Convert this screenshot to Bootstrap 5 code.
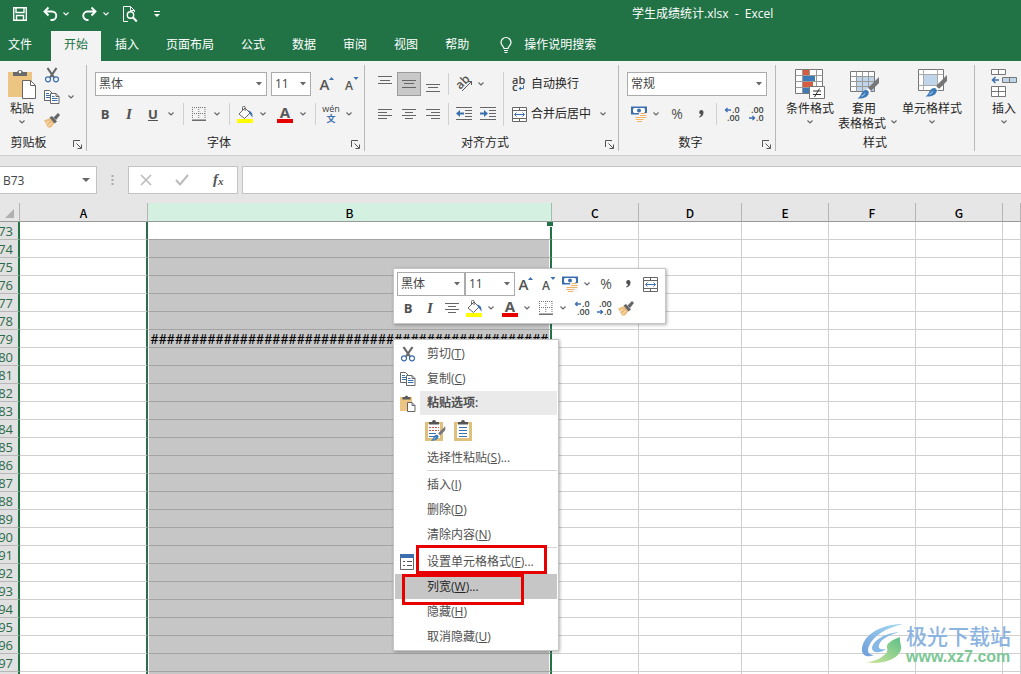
<!DOCTYPE html>
<html lang="zh-CN">
<head>
<meta charset="utf-8">
<meta name="viewport" content="width=device-width, initial-scale=1">
<title>学生成绩统计.xlsx - Excel</title>
<link href="https://cdn.jsdelivr.net/npm/bootstrap@5.3.0/dist/css/bootstrap.min.css" rel="stylesheet">
<style>
  body { font: 12px/16px "Open Sans", "Noto Sans CJK SC", sans-serif; color: #262626; background: #e6e6e6; }
  button, select, input { font: inherit; color: inherit; }
  button { background: none; border: 0; padding: 0; white-space: nowrap; }
  svg { display: block; flex: none; overflow: visible; }
  .app-head { background: #217346; color: #fff; }
  .title-row { height: 31px; padding-bottom: 3px; }
  .quick { width: 40%; padding-left: 13px; }
  .quick button { height: 28px; color: #fff; }
  .tab-row { height: 30px; gap: 1px; }
  .tab-row a { color: #fff; text-decoration: none; padding: 6px 13px 8px; height: 30px; }
  .tab-row a.file-tab { padding-left: 8px; margin-right: 5px; }
  .tab-row a.current { background: #f3f3f3; color: #217346; }
  .ribbon { background: #f3f3f3; border-bottom: 1px solid #cfcfcf; height: 95px; }
  .group { border-right: 1px solid #b9b9b9; margin: 4px 0; height: 86px; display: flex; flex-direction: column; flex: none; }
  .group-body { height: 71px; padding-top: 7px; }
  .group-foot { height: 16px; display: flex; }
  .group-foot span { flex: 1; text-align: center; }
  .group-foot button { margin: 4px 4px 0 0; height: 10px; }
  .tool-row { display: flex; align-items: center; height: 24px; }
  .tool-rows { display: grid; gap: 6px; align-content: start; }
  .ib { width: 24px; height: 24px; display: inline-flex; align-items: center; justify-content: center; color: #505050; flex: none; }
  .ib.tight { width: 20px; }
  .ib.on { background: #c8c8c8; box-shadow: inset 0 0 0 1px #9c9c9c; }
  .drop { width: 16px; height: 24px; display: inline-flex; align-items: center; justify-content: center; color: #666; flex: none; }
  .drop.slim { width: 10px; }
  .vline { width: 1px; height: 22px; background: #d0d0d0; margin: 0 5px 0 4px; flex: none; }
  .vline.near { margin: 0 3px; }
  .vline.tall { height: 54px; }
  .pick { appearance: none; border: 1px solid #ababab; border-radius: 0; height: 24px; padding: 0 3px; color: #444;
    background: #fff url("data:image/svg+xml,%3Csvg xmlns='http://www.w3.org/2000/svg' width='6' height='4'%3E%3Cpath d='M0 0h6L3 3.500z' fill='%23666'/%3E%3C/svg%3E") no-repeat right 4px center; flex: none; }
  .glyph { font-size: 13px; font-weight: 700; }
  .glyph.slant { font-family: "Liberation Serif", serif; font-style: italic; font-size: 15px; }
  .glyph.pct { font-size: 14px; font-weight: 400; }
  .big { display: flex; flex-direction: column; align-items: center; flex: none; line-height: 15px; }
  .big .pic { height: 32px; }
  .big .drop { height: 12px; }
  .clip-col { margin-left: 6px; }
  .styles-body { padding-left: 10px; }
  .formula { height: 47px; padding-top: 10px; }
  .formula .cellbox { border: 1px solid #c3c3c3; background: #fff; height: 28px; border-radius: 0; }
  .name-box { width: 98px; margin-left: -1px; padding-left: 3px; border: 1px solid #c3c3c3; color: #444;
    background: #fff url("data:image/svg+xml,%3Csvg xmlns='http://www.w3.org/2000/svg' width='8' height='4'%3E%3Cpath d='M0 0h8L4 4z' fill='%23666'/%3E%3C/svg%3E") no-repeat right 6px center; height: 28px; }
  .fx-set { width: 110px; }
  .sheet { overflow: hidden; min-height: 0; flex: 1 1 0; }
  .cells { table-layout: fixed; width: 100%; border-collapse: separate; border-spacing: 0; background: #fff; }
  .cells td, .cells th { padding: 0; height: 18px; line-height: 17px; border: 0 solid #d0d0d0; border-width: 0 1px 1px 0; font-weight: 400; }
  .cells thead th { background: #e6e6e6; height: 19px; line-height: 18px; padding-top: 2px; border-color: #999; border-right-color: #b4b4b4; color: #000; text-align: center; font-family: "Noto Sans CJK SC", sans-serif; font-size: 12px; line-height: 16px; font-weight: 500; }
  .cells thead th.chosen { background: #d3f0e0; border-right-color: #9dbfae; }
  .cells tbody th { background: #e1e1e1; color: #2c6b4a; border-right: 2px solid #217346; border-bottom-color: #b8b8b8; font-size: 13px; }
  .cells tbody th span { display: flex; justify-content: flex-end; height: 17px; padding: 1px 5px 0 0; }
  .cells td.before { border-right: 2px solid #2f6b4d; }
  .cells td.chosen { border-left: 1px solid #fff; border-right: 2px solid #217346; background: #c6c6c6; border-bottom-color: #a3a3a3; box-shadow: inset -1px 0 #fff; text-align: center; white-space: nowrap; color: #000; font-family: Lato, sans-serif; font-size: 14px; }
  .cells tbody tr:first-child td.chosen { background: #fff; position: relative; }
  .handle { position: absolute; right: -3px; top: 0; width: 6px; height: 5px; background: #217346; border-bottom: 1px solid #fff; }
  .popup { position: absolute; background: #fff; border: 1px solid #c6c6c6; box-shadow: 1px 1px 3px rgba(0,0,0,.3); }
  .mini { left: 393px; top: 65px; width: 273px; padding: 3px; }
  .mini .ib { width: 22px; }
  .mini .drop { width: 12px; margin-right: 2px; }
  .ctx { left: 393px; top: 136px; width: 166px; padding: 1px; color: #505050; }
  .ctx .item { display: flex; align-items: center; height: 25px; width: 100%; padding-top: 1px; text-align: left; }
  .ctx .slot { width: 32px; padding-left: 5px; }
  .ctx .head { height: 24px; padding-top: 0; font-weight: 600; }
  .ctx .head > span:last-child { background: #eaeaea; flex: 1; height: 24px; line-height: 24px; margin-left: -7px; padding-left: 7px; }
  .ctx .pastes { height: 30px; padding-left: 29px; }
  .ctx .hot { background: #c6c6c6; color: #262626; }
  .ctx hr { margin: 0 0 1px 32px; border-top: 1px solid #d5d5d5; opacity: 1; }
  .ring { position: absolute; border: 3px solid #e60000; pointer-events: none; }
  .ring.one { left: 22px; top: 205px; width: 131px; height: 29px; }
  .ring.two { left: 8px; top: 234px; width: 122px; height: 31px; }
  .brand { position: absolute; right: 10px; bottom: 8px; display: flex; gap: 2px; }
  .brand b { display: block; font-size: 21px; line-height: 24px; color: #8cb4e0; font-weight: 500; }
  .brand i { display: block; font: 700 16px/18px "Liberation Sans", sans-serif; color: #7cc795; }
</style>
</head>
<body class="vh-100 d-flex flex-column overflow-hidden">

<svg class="d-none" aria-hidden="true">
  <symbol id="chev" viewBox="0 0 6 4"><path d="M.5.5 3 3 5.500.5" fill="none" stroke="currentColor" stroke-width="1.100"/></symbol>
  <symbol id="launch" viewBox="0 0 9 9"><path d="M.5 7V.5H7M3.500 3.500 8 8M8.500 4.500v4h-4" fill="none" stroke="#555"/></symbol>
  <symbol id="cut" viewBox="0 0 16 16"><path d="M3.500 1 10 10.500M12.500 1 6 10.500" stroke="#666" stroke-width="2.200" fill="none"/><circle cx="4" cy="12.300" r="2.500" fill="none" stroke="#3b6fae" stroke-width="1.200"/><circle cx="12" cy="12.300" r="2.500" fill="none" stroke="#3b6fae" stroke-width="1.200"/></symbol>
  <symbol id="copy" viewBox="0 0 16 16"><path d="M.5 1.500h5l2.500 2.500v7.500H.5z" fill="#fff" stroke="#666"/><path d="M2 4.500h3M2 6.500h4M2 8.500h4" stroke="#3b6fae"/><path d="M6.500 4.500h5.500l3 3v7H6.500z" fill="#fff" stroke="#666"/><path d="M12 4.500v3h3" fill="none" stroke="#666"/><path d="M8 7.500h2.500M8 9.500h5.500M8 11.500h5.500" stroke="#3b6fae"/></symbol>
  <symbol id="brush" viewBox="0 0 16 16"><path d="M0 8.500 6 6l4.500 5L7 15.500H4z" fill="#edbd7c"/><path d="M2 11.500 5 9M4.500 14l3-3" stroke="#fff" stroke-width=".7"/><path d="M5.500 5.500 8 4l5 5.500-2.500 2z" fill="#666"/><path d="m9.500 5.500 4.500-4.500 2 2-4 5z" fill="#666"/></symbol>
  <symbol id="paste" viewBox="0 0 28 30"><path d="M0 3h24v25H0z" fill="#edc583"/><path d="M5 7V3h4a3.200 3.200 0 0 1 6 0h4v4z" fill="#6a6a6a"/><circle cx="12" cy="3" r="1.200" fill="#fff"/><path d="M14.500 11.500h8l5 5v13h-13z" fill="#fff" stroke="#666"/><path d="M22.500 11.500v5h5" fill="none" stroke="#666"/></symbol>
  <symbol id="paste-small" viewBox="0 0 16 17"><path d="M0 2h12v14H0z" fill="#edc583"/><path d="M2.500 4.500V2H5a1.500 1.500 0 0 1 3 0h2.500v2.500z" fill="#5a5a5a"/><path d="M7.500 7.500h4.500l3 3v6H7.500z" fill="#fff" stroke="#666"/><path d="M12 7.500v3h3" fill="none" stroke="#666"/></symbol>
  <symbol id="edges" viewBox="0 0 14 14"><path d="M.5 0v12M13 0v12M6.750 0v12M0 .5h14M0 6.500h14" stroke="#777" stroke-dasharray="1 1"/><path d="M0 13.200h14" stroke="#555" stroke-width="1.300"/></symbol>
  <symbol id="fill" viewBox="0 0 16 17"><path d="m2 8 6-6 5 5-5.500 5.500z" fill="#fff" stroke="#666"/><path d="M5.500 5V1.500a1.300 1.300 0 0 1 2.600 0V5" fill="none" stroke="#666"/><path d="M11 4.500c3 .5 5 2.500 4.500 7-1-1.500-2-2.500-3-4z" fill="#3b6fae"/><path d="M0 13h16v4H0z" fill="#ffff00"/></symbol>
  <symbol id="ink" viewBox="0 0 16 17"><text x="8" y="12" text-anchor="middle" font-family="Open Sans" font-weight="700" font-size="15" fill="#595959">A</text><path d="M0 13h16v4H0z" fill="#e60000"/></symbol>
  <symbol id="grow" viewBox="0 0 16 16"><text x="5.500" y="14" text-anchor="middle" font-family="Open Sans" font-weight="600" font-size="15" fill="#555">A</text><path d="M10 4h5L12.500 1z" fill="#3b6fae"/></symbol>
  <symbol id="shrink" viewBox="0 0 16 16"><text x="6" y="14" text-anchor="middle" font-family="Open Sans" font-weight="600" font-size="12" fill="#555">A</text><path d="M10.500 1h5L13 4z" fill="#3b6fae"/></symbol>
  <symbol id="a-top" viewBox="0 0 14 16"><path d="M0 .5h14M2 4.500h10M0 7.500h14" stroke="#666"/></symbol>
  <symbol id="a-mid" viewBox="0 0 14 16"><path d="M0 4.500h14M2 7.500h10M0 11.500h14" stroke="#666"/></symbol>
  <symbol id="a-bot" viewBox="0 0 14 16"><path d="M0 8.500h14M2 11.500h10M0 15.500h14" stroke="#666"/></symbol>
  <symbol id="a-left" viewBox="0 0 14 12"><path d="M0 1.500h14M0 4.500h9M0 7.500h14M0 10.500h9" stroke="#666"/></symbol>
  <symbol id="a-cen" viewBox="0 0 14 12"><path d="M0 1.500h14M3 4.500h8M0 7.500h14M3 10.500h8" stroke="#666"/></symbol>
  <symbol id="a-right" viewBox="0 0 14 12"><path d="M0 1.500h14M5 4.500h9M0 7.500h14M5 10.500h9" stroke="#666"/></symbol>
  <symbol id="outdent" viewBox="0 0 16 14"><path d="M0 .5h16M9 3.500h7M9 6.500h7M9 9.500h7M0 12.500h16" stroke="#666"/><path d="M0 6.500 4 3v2.500h4v2H4V10z" fill="#3b6fae"/></symbol>
  <symbol id="indent" viewBox="0 0 16 14"><path d="M0 .5h16M9 3.500h7M9 6.500h7M9 9.500h7M0 12.500h16" stroke="#666"/><path d="M8 6.500 4 3v2.500H0v2h4V10z" fill="#3b6fae"/></symbol>
  <symbol id="tilt" viewBox="0 0 16 16"><text x="1" y="12" transform="rotate(-45 5 9)" font-family="Open Sans" font-size="12" font-weight="600" fill="#555">ab</text><path d="M6 15 15.500 5.500M12 5.500h3.500V9" fill="none" stroke="#555"/></symbol>
  <symbol id="wrap" viewBox="0 0 14 16"><text x="0" y="8" font-family="Open Sans" font-size="11" font-weight="600" fill="#444">ab</text><text x="0" y="15" font-family="Open Sans" font-size="11" font-weight="600" fill="#444">c</text><path d="M11.500 9.500v3H8" fill="none" stroke="#3b6fae"/><path d="M6.500 12.500 9 10.500v4z" fill="#3b6fae"/></symbol>
  <symbol id="merge" viewBox="0 0 15 15"><path d="M.5.5h14v14H.5zM.5 3.500h14M.5 11.500h14M7.500.5v3M7.500 11.500v3" fill="#fff" stroke="#666"/><path d="M3 7.500h9M4.500 5.500l-2 2 2 2M10.500 5.500l2 2-2 2" fill="none" stroke="#3b6fae"/></symbol>
  <symbol id="money" viewBox="0 0 16 16"><path d="M0 .5h16v8H0z" fill="#3b6fae"/><path d="M3 2h10l1 1v3l-1 1H3L2 6V3z" fill="#fff"/><circle cx="8" cy="4.500" r="2" fill="#3b6fae"/><path d="M8 7h8v9H4v-5h4z" fill="#f7f7f7"/><path d="M9.500 7.500h5M9 9.500h6.500M4.500 11.500h6M9.500 11.500h6M4.500 13.500h8M6 15.500h5" stroke="#edb56c" stroke-width="1.200"/></symbol>
  <symbol id="dec-more" viewBox="0 0 16 16"><text x="8" y="7" font-family="Open Sans" font-size="9" font-weight="600" fill="#444">.0</text><text x="3" y="15" font-family="Open Sans" font-size="9" font-weight="600" fill="#444">.00</text><path d="M1 4h6M3.500 2 1.500 4l2 2" fill="none" stroke="#3b6fae" stroke-width="1.300"/></symbol>
  <symbol id="dec-less" viewBox="0 0 16 16"><text x="3" y="7" font-family="Open Sans" font-size="9" font-weight="600" fill="#444">.00</text><text x="8" y="15" font-family="Open Sans" font-size="9" font-weight="600" fill="#444">.0</text><path d="M1 12h6M4.500 10l2 2-2 2" fill="none" stroke="#3b6fae" stroke-width="1.300"/></symbol>
  <symbol id="comma" viewBox="0 0 6 8"><path d="M3 0a2.300 2.300 0 0 1 2.500 2.600C5.500 5 4 7 1.500 7.500L1 6.700C2.300 6 3 5.200 3 4.500A2.300 2.300 0 0 1 3 0z" fill="#505050"/></symbol>
  <symbol id="clip" viewBox="0 0 18 22"><path d="M0 3h18v19H0z" fill="#dfc07c"/><path d="M3 5h12v14H3z" fill="#fff"/><path d="M4 5.500V3h3a2 2 0 0 1 4 0h3v2.500z" fill="#555"/></symbol>
  <symbol id="painter" viewBox="0 0 22 22"><path d="M22 0v6l-8 8-3-3z" fill="#777"/><path d="m11 11 3 3-2 2-3-3z" fill="#fff"/><path d="M9 13c2 0 3.500 2 2.500 4-1 3-5 5-11 4.500C3 20 3.500 18 5 15.500c1-1.500 2.500-2.500 4-2.500z" fill="#3d7ab8"/><path d="M4.500 19c1.500 0 2.500-1 3-2.500" stroke="#d5e5f3" fill="none"/></symbol>
</svg>

<header class="app-head flex-shrink-0">
  <div class="title-row d-flex align-items-center">
    <div class="quick d-flex align-items-center">
      <button aria-label="保存"><svg width="14" height="14"><path d="M.7.7h12.600v12.600H.7zM3 1v4.500h8V1M3.500 13V8.500h7V13" fill="none" stroke="#fff" stroke-width="1.400"/></svg></button>
      <button aria-label="撤销" class="ms-3"><svg width="14" height="14"><path d="M1.500 4.500H9a4 4 0 0 1 0 8.500H7.500M5.500.5l-4 4 4 4" fill="none" stroke="#fff" stroke-width="1.900"/></svg></button>
      <button class="drop slim ms-1" aria-label="撤销列表"><svg width="6" height="4"><use href="#chev"/></svg></button>
      <button aria-label="恢复" class="ms-2 ps-1"><svg width="14" height="14"><path d="M12.500 4.500H5A4 4 0 0 0 4 13h1.500M8.500.5l4 4-4 4" fill="none" stroke="#fff" stroke-width="1.900"/></svg></button>
      <button class="drop slim ms-1" aria-label="恢复列表"><svg width="6" height="4"><use href="#chev"/></svg></button>
      <button aria-label="打印预览" class="ms-2 ps-1"><svg width="15" height="16"><path d="M5 15.500H.5V.5h7l4 4V6M7.500.5v4h4" fill="none" stroke="#fff"/><circle cx="7.500" cy="9" r="3.200" fill="none" stroke="#fff" stroke-width="1.400"/><path d="m10 11.500 3.800 4" stroke="#fff" stroke-width="2"/></svg></button>
      <button aria-label="自定义快速访问工具栏" class="ms-3"><svg width="6" height="7"><path d="M0 .5h6" stroke="#fff"/><path d="M0 3h6L3 6z" fill="#fff"/></svg></button>
    </div>
    <div class="flex-grow-1 text-center pe-4" style="white-space:pre">学生成绩统计.xlsx  -  Excel</div>
  </div>
  <nav class="tab-row d-flex">
    <a href="#" class="file-tab">文件</a><a href="#" class="current">开始</a><a href="#">插入</a><a href="#">页面布局</a><a href="#">公式</a><a href="#">数据</a><a href="#">审阅</a><a href="#">视图</a><a href="#">帮助</a>
    <a href="#" class="d-flex align-items-center gap-2"><svg width="12" height="16" class="ms-1"><path d="M4 11.500C4 9.500 1 8.500 1 5.500a5 5 0 0 1 10 0c0 3-3 4-3 6zM4 13.500h4M4.500 15.500h3" fill="none" stroke="#fff" stroke-width="1.200"/></svg><span class="ps-1">操作说明搜索</span></a>
  </nav>
</header>

<section class="ribbon d-flex overflow-hidden flex-shrink-0">
  <div class="group" style="width:87px">
    <div class="group-body d-flex pt-0">
      <button class="big ms-2 pt-1"><span class="pic"><svg width="28" height="30"><use href="#paste"/></svg></span><span>粘贴</span><span class="drop"><svg width="6" height="4"><use href="#chev"/></svg></span></button>
      <div class="clip-col d-flex flex-column">
        <button class="ib tight" aria-label="剪切" style="height:20px"><svg width="16" height="16"><use href="#cut"/></svg></button>
        <div class="d-flex"><button class="ib tight me-1" aria-label="复制"><svg width="16" height="16"><use href="#copy"/></svg></button><button class="drop slim" aria-label="复制选项"><svg width="6" height="4"><use href="#chev"/></svg></button></div>
        <button class="ib tight" aria-label="格式刷" style="height:22px"><svg width="16" height="16"><use href="#brush"/></svg></button>
      </div>
    </div>
    <div class="group-foot"><span class="pe-3">剪贴板</span><button aria-label="剪贴板设置"><svg width="9" height="9"><use href="#launch"/></svg></button></div>
  </div>

  <div class="group" style="width:278px">
    <div class="group-body tool-rows">
      <div class="tool-row ps-2"><select class="pick" style="width:172px" aria-label="字体"><option>黑体</option></select><select class="pick ms-1" style="width:40px" aria-label="字号"><option>11</option></select><button class="ib ms-1" aria-label="增大字号"><svg width="16" height="16"><use href="#grow"/></svg></button><button class="ib" aria-label="减小字号"><svg width="16" height="16"><use href="#shrink"/></svg></button></div>
      <div class="tool-row ps-2"><button class="ib tight glyph">B</button><button class="ib tight glyph slant ms-1">I</button><button class="ib tight glyph ms-1"><u>U</u></button><button class="drop" aria-label="下划线"><svg width="6" height="4"><use href="#chev"/></svg></button><i class="vline"></i><button class="ib tight" aria-label="边框"><svg width="14" height="14"><use href="#edges"/></svg></button><button class="drop" aria-label="边框选项"><svg width="6" height="4"><use href="#chev"/></svg></button><i class="vline"></i><button class="ib tight" aria-label="填充颜色"><svg width="16" height="17"><use href="#fill"/></svg></button><button class="drop me-1" aria-label="填充选项"><svg width="6" height="4"><use href="#chev"/></svg></button><button class="ib tight" aria-label="字体颜色"><svg width="16" height="17"><use href="#ink"/></svg></button><button class="drop" aria-label="颜色选项"><svg width="6" height="4"><use href="#chev"/></svg></button><i class="vline"></i><button class="ib tight" aria-label="拼音"><svg width="16" height="18"><text x="8" y="7" text-anchor="middle" font-size="9" fill="#444">wén</text><text x="8" y="17" text-anchor="middle" font-size="9" font-weight="700" fill="#3b6fae">文</text></svg></button><button class="drop" aria-label="拼音选项"><svg width="6" height="4"><use href="#chev"/></svg></button></div>
    </div>
    <div class="group-foot"><span>字体</span><button aria-label="字体设置"><svg width="9" height="9"><use href="#launch"/></svg></button></div>
  </div>

  <div class="group" style="width:254px">
    <div class="group-body d-flex">
      <div class="tool-rows ps-2">
        <div class="tool-row"><button class="ib" aria-label="顶端对齐"><svg width="14" height="16"><use href="#a-top"/></svg></button><button class="ib on" aria-label="垂直居中"><svg width="14" height="16"><use href="#a-mid"/></svg></button><button class="ib" aria-label="底端对齐"><svg width="14" height="16"><use href="#a-bot"/></svg></button><i class="vline near"></i><button class="ib" aria-label="方向"><svg width="16" height="16"><use href="#tilt"/></svg></button><button class="drop slim" aria-label="方向选项"><svg width="6" height="4"><use href="#chev"/></svg></button></div>
        <div class="tool-row"><button class="ib" aria-label="左对齐"><svg width="14" height="12"><use href="#a-left"/></svg></button><button class="ib" aria-label="居中"><svg width="14" height="12"><use href="#a-cen"/></svg></button><button class="ib" aria-label="右对齐"><svg width="14" height="12"><use href="#a-right"/></svg></button><i class="vline near"></i><button class="ib" aria-label="减少缩进"><svg width="16" height="14"><use href="#outdent"/></svg></button><button class="ib" aria-label="增加缩进"><svg width="16" height="14"><use href="#indent"/></svg></button></div>
      </div>
      <i class="vline near tall"></i>
      <div class="tool-rows">
        <button class="tool-row"><span class="ib"><svg width="14" height="16"><use href="#wrap"/></svg></span>自动换行</button>
        <div class="tool-row"><button class="tool-row"><span class="ib"><svg width="15" height="15"><use href="#merge"/></svg></span>合并后居中</button><button class="drop ms-1" aria-label="合并选项"><svg width="6" height="4"><use href="#chev"/></svg></button></div>
      </div>
    </div>
    <div class="group-foot"><span>对齐方式</span><button aria-label="对齐设置"><svg width="9" height="9"><use href="#launch"/></svg></button></div>
  </div>

  <div class="group" style="width:157px">
    <div class="group-body tool-rows">
      <div class="tool-row ps-2"><select class="pick" style="width:140px" aria-label="数字格式"><option>常规</option></select></div>
      <div class="tool-row ps-2"><button class="ib" aria-label="会计数字格式"><svg width="16" height="16"><use href="#money"/></svg></button><button class="drop slim me-1" aria-label="货币选项"><svg width="6" height="4"><use href="#chev"/></svg></button><button class="ib glyph pct">%</button><button class="ib" aria-label="千位分隔"><svg width="6" height="8"><use href="#comma"/></svg></button><i class="vline near"></i><button class="ib" aria-label="增加小数位数"><svg width="16" height="16"><use href="#dec-more"/></svg></button><button class="ib" aria-label="减少小数位数"><svg width="16" height="16"><use href="#dec-less"/></svg></button></div>
    </div>
    <div class="group-foot"><span>数字</span><button aria-label="数字设置"><svg width="9" height="9"><use href="#launch"/></svg></button></div>
  </div>

  <div class="group" style="width:199px">
    <div class="group-body styles-body d-flex pt-1">
      <button class="big"><span class="pic"><svg width="30" height="30"><path d="M.5.5h27v24H.5z" fill="#fff" stroke="#777"/><path d="M.5 6.500h27M.5 12.500h27M.5 18.500h27M7.500.5v24M14.500.5v24M21.500.5v24" stroke="#999"/><path d="M8 1h6v5H8zM8 13h10v5H8z" fill="#d85a3f"/><path d="M8 7h12v5H8zM8 19h6v5H8z" fill="#3d7ab8"/><path d="M14.500 17.500h15v12h-15z" fill="#fff" stroke="#777"/><path d="M18 22h8M18 25.500h8M24.500 19.500l-5 8.500" stroke="#333"/></svg></span><span>条件格式</span><span class="drop"><svg width="6" height="4"><use href="#chev"/></svg></span></button>
      <button class="big ms-1"><span class="pic"><svg width="30" height="30"><path d="M1.500 2.500h24v20h-24z" fill="#fff" stroke="#777"/><path d="M8 8h17v14H8z" fill="#c0d4ea"/><path d="M1.500 7.500h24M1.500 12.500h24M1.500 17.500h24M7.500 2.500v20M13.500 2.500v20M19.500 2.500v20" stroke="#999"/><svg x="8" y="8" width="22" height="22"><use href="#painter"/></svg></svg></span><span>套用</span><span class="d-flex" style="margin-right:-12px">表格格式<span class="drop"><svg width="6" height="4"><use href="#chev"/></svg></span></span></button>
      <button class="big ms-2 ps-1"><span class="pic"><svg width="30" height="30"><path d="M1.500.5h25v21h-25z" fill="#fff" stroke="#777"/><path d="M1.500 5.500h25M1.500 16.500h25M6.500.5v21M20.500.5v21" stroke="#aaa"/><path d="M7 6h13v10H7z" fill="#c0d4ea"/><svg x="8" y="6" width="22" height="22"><use href="#painter"/></svg></svg></span><span>单元格样式</span><span class="drop"><svg width="6" height="4"><use href="#chev"/></svg></span></button>
    </div>
    <div class="group-foot"><span>样式</span></div>
  </div>

  <div class="group border-0">
    <div class="group-body d-flex pt-1 ps-3">
      <button class="big"><span class="pic"><svg width="26" height="30"><path d="M.5.5h14v5H.5zM7.500.5v5M.5 17.500h14v10H.5zM7.500 17.500v10M.5 22.500h14" fill="#fff" stroke="#777"/><path d="M11.500 8.500h14v5h-14zM18.500 8.500v5" fill="#c0d4ea" stroke="#777"/><path d="M1 11h7M4.500 8 1.500 11l3 3" fill="none" stroke="#3b6fae" stroke-width="1.500"/></svg></span><span>插入</span><span class="drop"><svg width="6" height="4"><use href="#chev"/></svg></span></button>
    </div>
  </div>
</section>

<section class="formula d-flex flex-shrink-0">
  <input class="name-box" value="B73" aria-label="名称框">
  <svg width="31" height="28"><path d="M15.500 9v2M15.500 13v2M15.500 17v2" stroke="#aaa" stroke-width="2"/></svg>
  <div class="cellbox fx-set d-flex align-items-center justify-content-around">
    <button aria-label="取消"><svg width="12" height="12"><path d="M1 1l10 10M11 1 1 11" stroke="#bbb" stroke-width="1.600"/></svg></button>
    <button aria-label="输入"><svg width="14" height="12"><path d="m1 6 4 4.500L13 1" fill="none" stroke="#bbb" stroke-width="2"/></svg></button>
    <button aria-label="插入函数"><svg width="14" height="16"><text x="1" y="12" font-family="Liberation Serif" font-style="italic" font-weight="700" font-size="15" fill="#555">f</text><text x="6" y="13" font-family="Liberation Serif" font-style="italic" font-weight="700" font-size="11" fill="#555">x</text></svg></button>
  </div>
  <input class="cellbox flex-grow-1 ms-1 border-end-0" aria-label="编辑栏">
</section>

<main class="sheet position-relative">
  <table class="cells">
    <colgroup><col style="width:20px"><col style="width:128px"><col style="width:404px"><col style="width:87px"><col style="width:103px"><col style="width:87px"><col style="width:87px"><col style="width:87px"><col></colgroup>
    <thead><tr><th><svg width="12" height="11" class="ms-auto me-1"><path d="M11 1v9H2z" fill="#b0b0b0"/></svg></th><th>A</th><th class="chosen">B</th><th>C</th><th>D</th><th>E</th><th>F</th><th>G</th><th></th></tr></thead>
    <tbody id="rows"></tbody>
  </table>

  <div class="popup mini">
    <div class="tool-row"><select class="pick" style="width:68px" aria-label="浮动字体"><option>黑体</option></select><select class="pick" style="width:50px" aria-label="浮动字号"><option>11</option></select><button class="ib" aria-label="增大字号"><svg width="16" height="16"><use href="#grow"/></svg></button><button class="ib" aria-label="减小字号"><svg width="16" height="16"><use href="#shrink"/></svg></button><button class="ib" aria-label="会计数字格式"><svg width="16" height="16"><use href="#money"/></svg></button><button class="drop" aria-label="货币选项"><svg width="6" height="4"><use href="#chev"/></svg></button><button class="ib glyph pct">%</button><button class="ib" aria-label="千位分隔"><svg width="6" height="8"><use href="#comma"/></svg></button><button class="ib" aria-label="合并后居中"><svg width="15" height="15"><use href="#merge"/></svg></button></div>
    <div class="tool-row"><button class="ib glyph">B</button><button class="ib glyph slant">I</button><button class="ib" aria-label="居中"><svg width="14" height="12"><use href="#a-cen"/></svg></button><button class="ib" aria-label="填充颜色"><svg width="16" height="17"><use href="#fill"/></svg></button><button class="drop" aria-label="填充选项"><svg width="6" height="4"><use href="#chev"/></svg></button><button class="ib" aria-label="字体颜色"><svg width="16" height="17"><use href="#ink"/></svg></button><button class="drop" aria-label="颜色选项"><svg width="6" height="4"><use href="#chev"/></svg></button><button class="ib" aria-label="边框"><svg width="14" height="14"><use href="#edges"/></svg></button><button class="drop" aria-label="边框选项"><svg width="6" height="4"><use href="#chev"/></svg></button><button class="ib" aria-label="增加小数位数"><svg width="16" height="16"><use href="#dec-more"/></svg></button><button class="ib" aria-label="减少小数位数"><svg width="16" height="16"><use href="#dec-less"/></svg></button><button class="ib" aria-label="格式刷"><svg width="16" height="16"><use href="#brush"/></svg></button></div>
  </div>

  <div class="popup ctx">
    <button class="item"><span class="slot"><svg width="16" height="16"><use href="#cut"/></svg></span><span>剪切(<u>T</u>)</span></button>
    <button class="item"><span class="slot"><svg width="16" height="16"><use href="#copy"/></svg></span><span>复制(<u>C</u>)</span></button>
    <div class="item head"><span class="slot"><svg width="16" height="17"><use href="#paste-small"/></svg></span><span>粘贴选项:</span></div>
    <div class="pastes d-flex align-items-center gap-2">
      <button aria-label="粘贴"><svg width="22" height="24"><svg x="1" y="1" width="18" height="22"><use href="#clip"/></svg><path d="M5 9.500h10M5 12.500h10" stroke="#c9564b" stroke-dasharray="2 1"/><path d="M5 15.500h7M5 18.500h5" stroke="#3b6fae"/><svg x="6" y="8" width="16" height="15" viewBox="0 0 22 22"><use href="#painter"/></svg></svg></button>
      <button aria-label="值"><svg width="18" height="22"><use href="#clip"/><path d="M5 8.500h8M5 11.500h8M5 14.500h8M5 17.500h8" stroke="#3b6fae"/></svg></button>
    </div>
    <button class="item"><span class="slot"></span><span>选择性粘贴(<u>S</u>)...</span></button>
    <hr>
    <button class="item"><span class="slot"></span><span>插入(<u>I</u>)</span></button>
    <button class="item"><span class="slot"></span><span>删除(<u>D</u>)</span></button>
    <button class="item"><span class="slot"></span><span>清除内容(<u>N</u>)</span></button>
    <hr>
    <button class="item"><span class="slot"><svg width="14" height="16"><path d="M.5.5h13v15H.5z" fill="#fff" stroke="#666"/><path d="M0 0h14v4H0z" fill="#3b6fae"/><path d="M3 7.500h2M3 11.500h2M7 7.500h5M7 11.500h5" stroke="#555"/></svg></span><span>设置单元格格式(<u>F</u>)...</span></button>
    <button class="item hot"><span class="slot"></span><span>列宽(<u>W</u>)...</span></button>
    <button class="item"><span class="slot"></span><span>隐藏(<u>H</u>)</span></button>
    <button class="item"><span class="slot"></span><span>取消隐藏(<u>U</u>)</span></button>
    <div class="ring one"></div>
    <div class="ring two"></div>
  </div>

  <div class="brand">
    <svg width="42" height="40" viewBox="0 0 42 40"><defs><linearGradient id="sky" x1="0" y1="1" x2="1" y2="0"><stop offset="0" stop-color="#6f9cd8"/><stop offset="1" stop-color="#a6dcf3"/></linearGradient><linearGradient id="leaf" x1="0" y1="1" x2="1" y2="0"><stop offset="0" stop-color="#d3e79c"/><stop offset="1" stop-color="#5cbf85"/></linearGradient></defs><path d="M41 0C20 0 2 10 0 24c-1 8 6 10 12 7-6 0-7-4-5-9C11 12 24 4 41 0z" fill="url(#sky)"/><path d="M37 8C24 9 11 16 10 24c0 5 8 6 14 1-5 1-8 0-7-4 2-6 10-10 20-13z" fill="#86b9e6"/><path d="M38 13c-9 3-14 7-13 11 1 3 0 5-4 8-5 4-12 6-18 6 14 3 30-1 35-10 3-6-1-9 0-15z" fill="url(#leaf)"/></svg>
    <div><b>极光下载站</b><i>www.xz7.com</i></div>
  </div>
</main>

<script>
  // Visible rows of the worksheet; column B is selected and row 79 is too narrow for its value.
  const body = document.getElementById('rows');
  for (let r = 73; r < 98; r++) {
    const tr = document.createElement('tr');
    const value = r === 79 ? '#'.repeat(49) : '';
    const handle = r === 73 ? '<div class="handle"></div>' : '';
    tr.innerHTML = `<th scope="row"><span>${r}</span></th><td class="before"></td><td class="chosen">${value}${handle}</td>` + '<td></td>'.repeat(6);
    body.append(tr);
  }
  body.append(body.lastElementChild.cloneNode(true));
  body.lastElementChild.firstElementChild.textContent = '';
</script>
<script src="https://cdn.jsdelivr.net/npm/bootstrap@5.3.0/dist/js/bootstrap.bundle.min.js"></script>
</body>
</html>
